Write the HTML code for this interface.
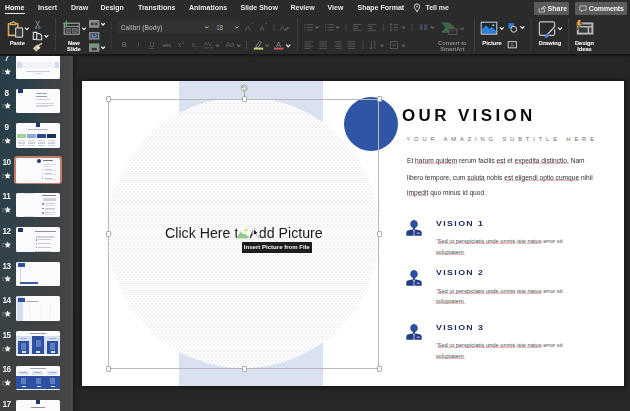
<!DOCTYPE html>
<html><head><meta charset="utf-8">
<style>
*{margin:0;padding:0;box-sizing:border-box}
html,body{width:630px;height:411px;overflow:hidden;background:#262626;font-family:"Liberation Sans",sans-serif;}
.abs{position:absolute}
#tabs{position:absolute;left:0;top:0;width:630px;height:17px;background:#2b2b2b}
#tabs span{position:absolute;top:2.8px;font-size:7px;font-weight:bold;color:#e6e6e6;white-space:nowrap;line-height:9px;filter:blur(.25px)}
#ribbon{position:absolute;left:0;top:17px;width:630px;height:37px;background:#2b2b2b}
#rline{position:absolute;left:0;top:53.8px;width:630px;height:5px;background:linear-gradient(180deg,#171717 0,#191919 1.4px,#212121 2.4px,#262626 5px)}
.lbl{position:absolute;font-size:5.7px;font-weight:bold;color:#f4f4f4;-webkit-text-stroke:.1px #f4f4f4;white-space:nowrap;line-height:6.4px;text-align:center;filter:blur(.25px)}
.sep{position:absolute;width:1px;background:#3e3e3e}
#panel{position:absolute;left:0;top:55.5px;width:69.5px;height:356px;background:linear-gradient(180deg,rgba(78,72,62,0) 60%,rgba(78,72,62,.25) 100%),linear-gradient(90deg,rgba(70,70,70,0) 50%,rgba(70,70,70,.5) 86%,rgba(70,70,70,.85) 100%),radial-gradient(ellipse 64px 300px at 0 30px,#283d46 0%,#2c4049 35%,#354349 65%,#3c4042 100%);overflow:hidden}
#scroll{position:absolute;left:69.5px;top:55.5px;width:3.2px;height:356px;background:linear-gradient(180deg,#484848 0,#494949 60%,#4c4a46 100%)}
#pshadow{position:absolute;left:72.7px;top:55.5px;width:7px;height:356px;background:linear-gradient(90deg,#1a1a1a 0,#222 40%,#262626 100%)}
#bstrip{position:absolute;left:72.7px;top:399.5px;width:558px;height:12px;background:#292929}
.th{position:absolute;left:16px;width:44px;height:24.5px;background:#fbfbfd;border-radius:1.5px;overflow:hidden}
.th i{position:absolute;display:block;filter:blur(.35px)}
.num{position:absolute;left:0;width:13px;text-align:center;font-size:8.2px;font-weight:bold;color:#f0f0f0;line-height:8px;letter-spacing:-.45px;filter:blur(.3px)}
.star{position:absolute;left:1.9px;width:9.4px;height:7.5px;filter:blur(.25px)}
#slide{position:absolute;left:82px;top:81px;width:542px;height:305px;background:#fff;box-shadow:0 0 3px 2px #191919;overflow:hidden}

.pl{position:absolute;font-size:7px;color:#2e2e2e;line-height:13px;white-space:nowrap;transform-origin:0 0;transform:scaleX(.943);filter:blur(.2px)}
.pl u{text-decoration:underline solid rgba(214,100,100,.45);text-decoration-thickness:.7px;text-underline-offset:.4px;text-decoration-skip-ink:none}
.vt{position:absolute;font-size:8px;font-weight:bold;letter-spacing:1.25px;color:#1c2b60;line-height:10px;white-space:nowrap;transform-origin:0 0;transform:scaleX(1.1);filter:blur(.2px)}
.vl{position:absolute;font-size:5.72px;color:#4a4a4a;line-height:8px;white-space:nowrap;transform-origin:0 0}
.vl u{text-decoration:underline solid rgba(214,100,100,.45);text-decoration-thickness:.5px;text-underline-offset:.3px;text-decoration-skip-ink:none}
.hd{position:absolute;width:5.2px;height:5.2px;background:#fff;border:.8px solid #a6a6a6;border-radius:1.2px;filter:blur(.2px)}
</style></head><body>
<div id="tabs">
<span style="left:5px;color:#fff">Home</span><i style="position:absolute;left:5px;top:13px;width:20px;height:1.2px;background:#f0f0f0"></i>
<span style="left:38px">Insert</span>
<span style="left:71px">Draw</span>
<span style="left:100.5px">Design</span>
<span style="left:138px">Transitions</span>
<span style="left:189px">Animations</span>
<span style="left:240.5px">Slide Show</span>
<span style="left:290.5px">Review</span>
<span style="left:327.5px">View</span>
<span style="left:357.5px">Shape Format</span>
<svg style="position:absolute;left:413.300px;top:3px;filter:blur(.2px)" width="8" height="10" viewBox="0 0 8 10"><path d="M4 .9a2.700 2.700 0 0 0-2.700 2.700c0 1.300.9 2.100 1.500 3.200L4 8.900l1.200-2.100c.6-1.100 1.500-1.900 1.500-3.200A2.700 2.700 0 0 0 4 .9z" fill="none" stroke="#e0e0e0" stroke-width=".95"/><circle cx="4" cy="3.600" r=".8" fill="#e0e0e0"/></svg>
<span style="left:425.400px">Tell me</span>
<div style="position:absolute;left:533.5px;top:2px;width:35.5px;height:12.7px;background:#5b5b5b;border-radius:1.5px"></div>
<svg style="position:absolute;left:537.5px;top:5.2px" width="8" height="8" viewBox="0 0 8 8"><path d="M1 3.5v3.5h5.5V5M3 4.6c.4-1.6 1.6-2.4 3-2.4V1l1.6 1.8L6 4.6V3.4c-1.2 0-2.2.3-3 1.2z" fill="none" stroke="#e2e2e2" stroke-width=".7"/></svg>
<span style="left:547.6px;top:4.2px;color:#f2f2f2">Share</span>
<div style="position:absolute;left:574.8px;top:2px;width:52px;height:12.7px;background:#5b5b5b;border-radius:1.5px"></div>
<svg style="position:absolute;left:579px;top:5.4px" width="8" height="8" viewBox="0 0 8 8"><path d="M.8 1h6.4v4.2H4L2.4 6.8V5.2H.8z" fill="none" stroke="#e2e2e2" stroke-width=".7"/></svg>
<span style="left:588.8px;top:4.2px;color:#f2f2f2;letter-spacing:-.15px">Comments</span>
</div>
<div id="ribbon"></div>
<div id="rline"></div><!--RIB--><svg id="rsvg" style="position:absolute;left:0;top:0;filter:blur(.3px)" width="630" height="56" viewBox="0 0 630 56"><path d="M11 23.800H8.500V35.400H15M16.200 23.800H17.800V27" fill="none" stroke="#dba866" stroke-width="1.600" stroke-linejoin="round"/><path d="M10.600 24.600V22.800H12L13.200 21.400L14.400 22.800H15.800V24.600z" fill="#2b2b2b" stroke="#dba866" stroke-width="1.200"/><rect x="15.600" y="27.800" width="7" height="9.400" rx=".8" fill="#3a3a3a" stroke="#c6c6c6" stroke-width="1.200"/><path d="M25.35 28.075L26.8 29.67L28.25 28.075" fill="none" stroke="#f0f0f0" stroke-width="1.25" stroke-linecap="round" stroke-linejoin="round"/><path d="M35.800 20.800L39.200 26.800M39.600 20.800L36.200 26.800" stroke="#8596b4" stroke-width=".9" fill="none"/><circle cx="36" cy="27.700" r=".9" fill="none" stroke="#8596b4" stroke-width=".8"/><circle cx="39.400" cy="27.700" r=".9" fill="none" stroke="#8596b4" stroke-width=".8"/><path d="M33.300 32.300h3.700v7h-3.700z" fill="none" stroke="#d6d6d6" stroke-width="1.150"/><path d="M36.700 33.600h3l1.900 1.900v4.200h-4.900z" fill="#2b2b2b" stroke="#d6d6d6" stroke-width="1.150" stroke-linejoin="round"/><path d="M44.949999999999996 35.574999999999996L46.4 37.169999999999995L47.85 35.574999999999996" fill="none" stroke="#f0f0f0" stroke-width="1.25" stroke-linecap="round" stroke-linejoin="round"/><path d="M33 48.200L37.400 44.600L40.600 47.800L36.200 51.600z" fill="#ead8bb"/><path d="M35.200 47.800L38 50.400" stroke="#5a4a38" stroke-width=".7"/><path d="M38.600 45.400L41.400 43.600" stroke="#c9c0b2" stroke-width="1.700" stroke-linecap="round"/><path d="M55.5 18V50" stroke="#3d3d3d" stroke-width="1"/><rect x="64.2" y="23.2" width="15" height="11" fill="none" stroke="#a8a8a8" stroke-width="1.1"/><path d="M64.2 26.4h15" stroke="#a8a8a8" stroke-width=".9"/><rect x="66.2" y="28.6" width="4.6" height="3.8" fill="#555" stroke="#8a8a8a" stroke-width=".6"/><rect x="72.6" y="28.6" width="4.6" height="3.8" fill="#555" stroke="#8a8a8a" stroke-width=".6"/><path d="M66.4 20.6v6M63.4 23.6h6" stroke="#5fae6e" stroke-width="1.1"/><path d="M82.55 28.075L84 29.67L85.45 28.075" fill="none" stroke="#f0f0f0" stroke-width="1.25" stroke-linecap="round" stroke-linejoin="round"/><rect x="89" y="20" width="10.4" height="7.8" fill="#8c8c8c"/><rect x="91" y="22.6" width="2.6" height="2.6" fill="#3a3a3a"/><rect x="94.8" y="22.6" width="2.6" height="2.6" fill="#3a3a3a"/><path d="M101.55 23.474999999999998L103 25.07L104.45 23.474999999999998" fill="none" stroke="#f0f0f0" stroke-width="1.25" stroke-linecap="round" stroke-linejoin="round"/><rect x="89" y="32" width="10.4" height="7.6" fill="#8c8c8c"/><rect x="90.4" y="33.2" width="7.6" height="5" fill="#3a4f78"/><path d="M92.4 34.4v2.6h2.2M95.2 34.2a1.6 1.6 0 0 1 0 3" fill="none" stroke="#9fb4dd" stroke-width=".8"/><rect x="89" y="43.4" width="10.4" height="8.4" fill="#8c8c8c"/><rect x="89.6" y="44" width="9.2" height="2.4" fill="#6f9b76"/><rect x="91.6" y="47.8" width="5.2" height="2.6" fill="#3a3a3a"/><path d="M101.55 46.975L103 48.57L104.45 46.975" fill="none" stroke="#f0f0f0" stroke-width="1.25" stroke-linecap="round" stroke-linejoin="round"/><path d="M111.5 18V50" stroke="#343434" stroke-width="1"/><rect x="117.5" y="21" width="123" height="12.8" rx="1.5" fill="#323232"/><path d="M205.39999999999998 26.75L206.7 28.18L208.0 26.75" fill="none" stroke="#c0c0c0" stroke-width="1" stroke-linecap="round" stroke-linejoin="round"/><path d="M235.5 26.75L236.8 28.18L238.10000000000002 26.75" fill="none" stroke="#c0c0c0" stroke-width="1" stroke-linecap="round" stroke-linejoin="round"/><text x="245" y="30.6" font-size="8.5" fill="#5e5e5e" font-family="Liberation Sans">A</text><path d="M251.4 24l1 -1.2l1 1.2" stroke="#5e5e5e" stroke-width=".7" fill="none"/><text x="259.4" y="30.6" font-size="7.4" fill="#5e5e5e" font-family="Liberation Sans">A</text><path d="M264.8 23l1 1.2l1 -1.2" stroke="#5e5e5e" stroke-width=".7" fill="none"/><path d="M274 23.5V31" stroke="#444" stroke-width="1"/><text x="279.6" y="30.8" font-size="8.5" fill="#5e5e5e" font-family="Liberation Sans">A</text><path d="M285 30.4l3.4 -3.4" stroke="#6b5560" stroke-width="1.6"/><text x="121.8" y="47" font-size="7" fill="#5e5e5e" font-family="Liberation Sans" font-weight="bold">B</text><text x="137.2" y="47" font-size="7" fill="#5e5e5e" font-family="Liberation Sans" font-style="italic">I</text><text x="149.4" y="46.6" font-size="7" fill="#5e5e5e" font-family="Liberation Sans" >U</text><path d="M149 48.4h5.6" stroke="#5e5e5e" stroke-width=".7"/><text x="162.4" y="47" font-size="5.4" fill="#5e5e5e" font-family="Liberation Sans" >abc</text><path d="M162 45.4h8.8" stroke="#5e5e5e" stroke-width=".6"/><text x="178" y="47.4" font-size="6.6" fill="#5e5e5e" font-family="Liberation Sans" >x</text><text x="181.8" y="44.4" font-size="3.6" fill="#5e5e5e" font-family="Liberation Sans" >2</text><text x="191.8" y="46.6" font-size="6.6" fill="#5e5e5e" font-family="Liberation Sans" >x</text><text x="195.6" y="48.6" font-size="3.6" fill="#5e5e5e" font-family="Liberation Sans" >2</text><text x="204" y="46" font-size="6.2" fill="#5e5e5e" font-family="Liberation Sans" >AV</text><path d="M204.4 47.8h8M204.4 47.8l1 -.8M204.4 47.8l1 .8M212.4 47.8l-1 -.8M212.4 47.8l-1 .8" stroke="#5e5e5e" stroke-width=".5" fill="none"/><path d="M216.25 44.875L217.7 46.47L219.14999999999998 44.875" fill="none" stroke="#5e5e5e" stroke-width="1.25" stroke-linecap="round" stroke-linejoin="round"/><text x="225.4" y="47.4" font-size="7.4" fill="#5e5e5e" font-family="Liberation Sans" >Aa</text><path d="M237.25 44.875L238.7 46.47L240.14999999999998 44.875" fill="none" stroke="#5e5e5e" stroke-width="1.25" stroke-linecap="round" stroke-linejoin="round"/><path d="M246.6 41V49.5" stroke="#444" stroke-width="1"/><path d="M256 46l3.6-4.8 2 1.4-3.6 4.6-2 .4z" fill="none" stroke="#9a9a9a" stroke-width=".8"/><rect x="253.8" y="47.6" width="9.4" height="2" fill="#c3cd78"/><path d="M265.75 44.875L267.2 46.47L268.65 44.875" fill="none" stroke="#5e5e5e" stroke-width="1.25" stroke-linecap="round" stroke-linejoin="round"/><text x="276" y="46.6" font-size="7.6" fill="#8a8a8a" font-family="Liberation Sans" >A</text><rect x="274" y="47.6" width="9.4" height="2" fill="#d4555a"/><path d="M286.5 44.949999999999996L288.2 46.82L289.9 44.949999999999996" fill="none" stroke="#f2f2f2" stroke-width="1.2" stroke-linecap="round" stroke-linejoin="round"/><path d="M297.5 18V51" stroke="#3d3d3d" stroke-width="1"/><rect x="304.4" y="24.1" width="1" height="1" fill="#5e5e5e"/><path d="M306.79999999999995 24.6h6.4" stroke="#5e5e5e" stroke-width=".8"/><rect x="304.4" y="26.8" width="1" height="1" fill="#5e5e5e"/><path d="M306.79999999999995 27.3h6.4" stroke="#5e5e5e" stroke-width=".8"/><rect x="304.4" y="29.5" width="1" height="1" fill="#5e5e5e"/><path d="M306.79999999999995 30.0h6.4" stroke="#5e5e5e" stroke-width=".8"/><path d="M315.75 26.674999999999997L317.2 28.27L318.65 26.674999999999997" fill="none" stroke="#5e5e5e" stroke-width="1.25" stroke-linecap="round" stroke-linejoin="round"/><rect x="325" y="24.1" width="1" height="1" fill="#5e5e5e"/><path d="M327.4 24.6h6.4" stroke="#5e5e5e" stroke-width=".8"/><rect x="325" y="26.8" width="1" height="1" fill="#5e5e5e"/><path d="M327.4 27.3h6.4" stroke="#5e5e5e" stroke-width=".8"/><rect x="325" y="29.5" width="1" height="1" fill="#5e5e5e"/><path d="M327.4 30.0h6.4" stroke="#5e5e5e" stroke-width=".8"/><path d="M336.15000000000003 26.674999999999997L337.6 28.27L339.05 26.674999999999997" fill="none" stroke="#5e5e5e" stroke-width="1.25" stroke-linecap="round" stroke-linejoin="round"/><path d="M346 23.5V31" stroke="#444" stroke-width="1"/><path d="M353 24.4h8.4" stroke="#5e5e5e" stroke-width="0.8"/><path d="M353 26.4h5.04" stroke="#5e5e5e" stroke-width="0.8"/><path d="M353 28.4h5.04" stroke="#5e5e5e" stroke-width="0.8"/><path d="M353 30.4h8.4" stroke="#5e5e5e" stroke-width="0.8"/><path d="M367.6 24.4h8.4" stroke="#5e5e5e" stroke-width="0.8"/><path d="M367.6 26.4h5.04" stroke="#5e5e5e" stroke-width="0.8"/><path d="M367.6 28.4h5.04" stroke="#5e5e5e" stroke-width="0.8"/><path d="M367.6 30.4h8.4" stroke="#5e5e5e" stroke-width="0.8"/><path d="M383.4 23.5V31" stroke="#444" stroke-width="1"/><path d="M391 23.6v7.6M389.8 25l1.2-1.4 1.2 1.4M389.8 29.8l1.2 1.4 1.2-1.4" stroke="#5e5e5e" stroke-width=".7" fill="none"/><path d="M393.6 24.6h4.6" stroke="#5e5e5e" stroke-width="0.8"/><path d="M393.6 27.3h4.6" stroke="#5e5e5e" stroke-width="0.8"/><path d="M393.6 30.0h4.6" stroke="#5e5e5e" stroke-width="0.8"/><path d="M402.15000000000003 26.674999999999997L403.6 28.27L405.05 26.674999999999997" fill="none" stroke="#5e5e5e" stroke-width="1.25" stroke-linecap="round" stroke-linejoin="round"/><path d="M412 23.5V31" stroke="#444" stroke-width="1"/><rect x="419.6" y="24.4" width="3.2" height="5.6" fill="#414858"/><rect x="424" y="24.4" width="3.2" height="5.6" fill="#414858"/><path d="M430.95 26.674999999999997L432.4 28.27L433.84999999999997 26.674999999999997" fill="none" stroke="#5e5e5e" stroke-width="1.25" stroke-linecap="round" stroke-linejoin="round"/><path d="M304.6 41.8h8.4" stroke="#5e5e5e" stroke-width="0.8"/><path d="M304.6 44.0h5.88" stroke="#5e5e5e" stroke-width="0.8"/><path d="M304.6 46.199999999999996h8.4" stroke="#5e5e5e" stroke-width="0.8"/><path d="M304.6 48.4h5.88" stroke="#5e5e5e" stroke-width="0.8"/><path d="M319.4 41.8h7.6" stroke="#5e5e5e" stroke-width="0.8"/><path d="M319.4 44.0h7.6" stroke="#5e5e5e" stroke-width="0.8"/><path d="M319.4 46.199999999999996h7.6" stroke="#5e5e5e" stroke-width="0.8"/><path d="M319.4 48.4h7.6" stroke="#5e5e5e" stroke-width="0.8"/><path d="M334.2 41.8h7.6M335.6 44h6.2M334.2 46.2h7.6M335.6 48.4h6.2" stroke="#5e5e5e" stroke-width=".8"/><path d="M347.6 41.8h7.6" stroke="#5e5e5e" stroke-width="0.8"/><path d="M347.6 44.0h7.6" stroke="#5e5e5e" stroke-width="0.8"/><path d="M347.6 46.199999999999996h7.6" stroke="#5e5e5e" stroke-width="0.8"/><path d="M347.6 48.4h7.6" stroke="#5e5e5e" stroke-width="0.8"/><path d="M363 41V49.5" stroke="#444" stroke-width="1"/><path d="M371.4 41v8M370 47.6l1.4 1.6 1.4-1.6" stroke="#5e5e5e" stroke-width=".7" fill="none"/><path d="M374.8 41v8" stroke="#5e5e5e" stroke-width=".7"/><path d="M380.55 44.875L382 46.47L383.45 44.875" fill="none" stroke="#5e5e5e" stroke-width="1.25" stroke-linecap="round" stroke-linejoin="round"/><rect x="390.4" y="41.6" width="7" height="7" fill="none" stroke="#5e5e5e" stroke-width=".8"/><path d="M391.8 45.1h4.2" stroke="#5e5e5e" stroke-width=".8"/><path d="M402.15000000000003 44.875L403.6 46.47L405.05 44.875" fill="none" stroke="#5e5e5e" stroke-width="1.25" stroke-linecap="round" stroke-linejoin="round"/><path d="M440.800 22.400h8.800l5.200 5.200-5.200 5.200h-8.800l4.800-5.200z" fill="#3d6549"/><rect x="448.600" y="28.600" width="8.400" height="5.800" fill="#2c2c2c" stroke="#5c5c5c" stroke-width=".9"/><path d="M448.600 30.400h8.400" stroke="#5c5c5c" stroke-width=".7"/><path d="M460.75 28.075L462.2 29.67L463.65 28.075" fill="none" stroke="#5e5e5e" stroke-width="1.25" stroke-linecap="round" stroke-linejoin="round"/><path d="M474.5 18V51" stroke="#3d3d3d" stroke-width="1"/><rect x="481.2" y="22.2" width="15.6" height="12" fill="#1d2838"/><path d="M481.6 33.8v-4l4.4-4.600 3.400 3.600 2.200-2 4.800 4.400v2.600z" fill="#2f80d6"/><circle cx="493.4" cy="25.200" r="1" fill="#d9c9a0"/><rect x="481.2" y="22.2" width="15.6" height="12" fill="none" stroke="#ccd3dc" stroke-width="1"/><path d="M500.2 27.599999999999998L501.8 29.36L503.40000000000003 27.599999999999998" fill="none" stroke="#f0f0f0" stroke-width="1.2" stroke-linecap="round" stroke-linejoin="round"/><rect x="508.4" y="23.200" width="5.600" height="5.200" fill="#2f7dd1"/><circle cx="513.8" cy="29.300" r="2.900" fill="#2b2b2b" stroke="#d2d2d2" stroke-width="1"/><path d="M520.6999999999999 26.599999999999998L522.3 28.36L523.9 26.599999999999998" fill="none" stroke="#f0f0f0" stroke-width="1.2" stroke-linecap="round" stroke-linejoin="round"/><rect x="508.2" y="41.6" width="8.200" height="6.200" fill="none" stroke="#c8c8c8" stroke-width="1"/><text x="510.6" y="46.8" font-size="4.8" fill="#6fa0dc" font-family="Liberation Sans" >A</text><path d="M531 18V51" stroke="#3d3d3d" stroke-width="1"/><rect x="539.4" y="21.800" width="15.200" height="13.600" rx="1.2" fill="none" stroke="#c4c4c4" stroke-width="1.2"/><path d="M546.600 35.600l8.200-9.200" stroke="#2b2b2b" stroke-width="3.400"/><path d="M548 34l6.800-7.600" stroke="#dadada" stroke-width="1.200"/><path d="M544.200 37.800c2.600.6 5-.8 5.400-3.600l-2.600-1.400c-1 1.800-.8 3.600-2.800 5z" fill="#3f8de0"/><path d="M558.4 27.8L560 29.560000000000002L561.6 27.8" fill="none" stroke="#f0f0f0" stroke-width="1.2" stroke-linecap="round" stroke-linejoin="round"/><path d="M568.7 18V51" stroke="#3d3d3d" stroke-width="1"/><rect x="577.800" y="23.400" width="14.600" height="10.200" fill="#3a3a3a" stroke="#b4b4b4" stroke-width="2"/><path d="M577.800 26.800h14.600M588.400 26.800v7" stroke="#b4b4b4" stroke-width="1.500"/><path d="M577.800 19.800h3.600l-1.400 3.600h2.200l-5 6.600 1.400-4.600h-2.400z" fill="#f3a73a" stroke="#2b2b2b" stroke-width=".6"/></svg>
<div class="lbl" style="left:2.300px;width:30px;top:40px">Paste</div>
<div class="lbl" style="left:58.900px;width:30px;top:40px">New<br>Slide</div>
<div class="lbl" style="left:432.300px;width:40px;top:40px;color:#8a8a8a;-webkit-text-stroke:0">Convert to<br>SmartArt</div>
<div class="lbl" style="left:477px;width:30px;top:40px">Picture</div>
<div class="lbl" style="left:535px;width:30px;top:40px">Drawing</div>
<div class="lbl" style="left:569.500px;width:30px;top:40px">Design<br>Ideas</div>
<div class="lbl" style="left:120.800px;top:24.200px;font-size:6.350px;color:#9c9c9c;-webkit-text-stroke:0;line-height:7px">Calibri (Body)</div>
<div class="lbl" style="left:216.200px;top:24.200px;font-size:6.300px;font-weight:normal;color:#a4a4a4;-webkit-text-stroke:0;line-height:7px;letter-spacing:-.2px;filter:none">18</div>
<!--/RIB-->
<!--PANEL--><div id="panel"><div class="th" style="top:-1.3px"><i style="left:1.2px;top:7.5px;width:4.6px;height:6px;background:#d3dcf0"></i><i style="left:38.6px;top:7.5px;width:4.6px;height:6px;background:#d3dcf0"></i><i style="left:5.8px;top:7.5px;width:32.8px;height:6px;background:#f0f2f7"></i><i style="left:10px;top:17.2px;width:24px;height:0.7px;background:#c9ccd6"></i><i style="left:18px;top:19.2px;width:8px;height:0.6px;background:#d9dbe3"></i></div><div class="num" style="top:-0.5px">7</div><svg class="star" style="top:12.3px" viewBox="0 0 10 8"><path d="M.6 2.600h1.200M.4 4.200h1M.6 5.800h1.200" stroke="#d8d8d8" stroke-width=".6"/><path d="M6 .5l1.060 2.250 2.440.3-1.800 1.700.46 2.450L6 6l-2.160 1.200.46-2.450-1.800-1.700 2.440-.3z" fill="#f4f4f4"/></svg><div class="th" style="top:33.3px"><i style="left:2.4px;top:0.6px;width:4.2px;height:3.8px;background:#22366f"></i><i style="left:19.8px;top:4px;width:11px;height:0.9px;background:#9a9eaa"></i><i style="left:19.8px;top:7px;width:11px;height:0.9px;background:#9a9eaa"></i><i style="left:19.8px;top:10.6px;width:14px;height:0.5px;background:#d2d4dc"></i><i style="left:19.8px;top:14.6px;width:18px;height:0.5px;background:#cfd2da"></i><i style="left:19.8px;top:16px;width:18px;height:0.5px;background:#cfd2da"></i><i style="left:19.8px;top:17.4px;width:12px;height:0.5px;background:#d6d8e0"></i></div><div class="num" style="top:34.1px">8</div><svg class="star" style="top:46.9px" viewBox="0 0 10 8"><path d="M.6 2.600h1.200M.4 4.200h1M.6 5.800h1.200" stroke="#d8d8d8" stroke-width=".6"/><path d="M6 .5l1.060 2.250 2.440.3-1.800 1.700.46 2.450L6 6l-2.160 1.200.46-2.450-1.800-1.700 2.440-.3z" fill="#f4f4f4"/></svg><div class="th" style="top:67.9px"><i style="left:20px;top:0px;width:3.5px;height:3.2px;background:#22366f"></i><i style="left:12px;top:5.8px;width:20px;height:0.7px;background:#b5b8c4"></i><i style="left:1px;top:10.6px;width:8.5px;height:4.2px;background:#a7cc8d"></i><i style="left:11px;top:10.6px;width:8.5px;height:4.2px;background:#8da9db"></i><i style="left:21px;top:10.6px;width:8.5px;height:4.2px;background:#2a4b8f"></i><i style="left:31px;top:10.6px;width:8.9px;height:4.2px;background:#1b2f5f"></i><i style="left:1.5px;top:17.0px;width:7.5px;height:0.5px;background:#d0d3dc"></i><i style="left:1.5px;top:18.4px;width:7.5px;height:0.5px;background:#d0d3dc"></i><i style="left:1.5px;top:19.8px;width:7.5px;height:0.5px;background:#d0d3dc"></i><i style="left:1.5px;top:21.2px;width:7.5px;height:0.5px;background:#d0d3dc"></i><i style="left:11.5px;top:17.0px;width:7.5px;height:0.5px;background:#d0d3dc"></i><i style="left:11.5px;top:18.4px;width:7.5px;height:0.5px;background:#d0d3dc"></i><i style="left:11.5px;top:19.8px;width:7.5px;height:0.5px;background:#d0d3dc"></i><i style="left:11.5px;top:21.2px;width:7.5px;height:0.5px;background:#d0d3dc"></i><i style="left:21.5px;top:17.0px;width:7.5px;height:0.5px;background:#d0d3dc"></i><i style="left:21.5px;top:18.4px;width:7.5px;height:0.5px;background:#d0d3dc"></i><i style="left:21.5px;top:19.8px;width:7.5px;height:0.5px;background:#d0d3dc"></i><i style="left:21.5px;top:21.2px;width:7.5px;height:0.5px;background:#d0d3dc"></i><i style="left:31.5px;top:17.0px;width:7.5px;height:0.5px;background:#d0d3dc"></i><i style="left:31.5px;top:18.4px;width:7.5px;height:0.5px;background:#d0d3dc"></i><i style="left:31.5px;top:19.8px;width:7.5px;height:0.5px;background:#d0d3dc"></i><i style="left:31.5px;top:21.2px;width:7.5px;height:0.5px;background:#d0d3dc"></i></div><div class="num" style="top:68.7px">9</div><svg class="star" style="top:81.5px" viewBox="0 0 10 8"><path d="M.6 2.600h1.200M.4 4.200h1M.6 5.800h1.200" stroke="#d8d8d8" stroke-width=".6"/><path d="M6 .5l1.060 2.250 2.440.3-1.800 1.700.46 2.450L6 6l-2.160 1.200.46-2.450-1.800-1.700 2.440-.3z" fill="#f4f4f4"/></svg><div style="position:absolute;left:14.300px;top:100.8px;width:47.400px;height:27.900px;border-radius:3.2px;background:#c67a6b;filter:blur(.45px)"></div><div class="th" style="top:102.5px"><i style="left:21.300px;top:.900px;width:4px;height:4px;border-radius:50%;background:#22366f"></i><i style="left:26.6px;top:2.4px;width:10.4px;height:0.9px;background:#6f7380"></i><i style="left:27px;top:6px;width:13px;height:0.6px;background:#d9dbe2"></i><i style="left:27px;top:7.6px;width:9px;height:0.6px;background:#e0e2e8"></i><i style="left:25.8px;top:10.8px;width:1.7px;height:1.7px;background:#b4bbd2"></i><i style="left:28.6px;top:11.0px;width:7px;height:0.6px;background:#c4c7d1"></i><i style="left:28.6px;top:12.4px;width:11px;height:0.5px;background:#e0e2e8"></i><i style="left:25.8px;top:14.8px;width:1.7px;height:1.7px;background:#b4bbd2"></i><i style="left:28.6px;top:15.0px;width:7px;height:0.6px;background:#c4c7d1"></i><i style="left:28.6px;top:16.400000000000002px;width:11px;height:0.5px;background:#e0e2e8"></i><i style="left:25.8px;top:19.4px;width:1.7px;height:1.7px;background:#b4bbd2"></i><i style="left:28.6px;top:19.599999999999998px;width:7px;height:0.6px;background:#c4c7d1"></i><i style="left:28.6px;top:21.0px;width:11px;height:0.5px;background:#e0e2e8"></i><i style="left:8px;top:0px;width:11.6px;height:0.8px;background:#eef1f8"></i><i style="left:8px;top:23.4px;width:11.6px;height:0.8px;background:#eef1f8"></i></div><div class="num" style="top:103.3px">10</div><svg class="star" style="top:116.1px" viewBox="0 0 10 8"><path d="M.6 2.600h1.200M.4 4.200h1M.6 5.800h1.200" stroke="#d8d8d8" stroke-width=".6"/><path d="M6 .5l1.060 2.250 2.440.3-1.800 1.700.46 2.450L6 6l-2.160 1.200.46-2.450-1.800-1.700 2.440-.3z" fill="#f4f4f4"/></svg><div class="th" style="top:137.1px"><i style="left:8px;top:0.4px;width:9.5px;height:0.9px;background:#d5dcee"></i><i style="left:8px;top:23.2px;width:9.5px;height:0.9px;background:#d5dcee"></i><i style="left:26px;top:2.2px;width:14px;height:0.9px;background:#7d818d"></i><i style="left:26.5px;top:5px;width:13px;height:0.5px;background:#d0d2da"></i><i style="left:26.5px;top:6.4px;width:13px;height:0.5px;background:#d0d2da"></i><i style="left:26.5px;top:7.8px;width:13px;height:0.5px;background:#d0d2da"></i><i style="left:26.4px;top:10.7px;width:1.6px;height:1.6px;background:#8c8fa6"></i><i style="left:28.8px;top:10.9px;width:10px;height:0.5px;background:#c9ccd5"></i><i style="left:28.8px;top:12.2px;width:10px;height:0.5px;background:#d9dbe2"></i><i style="left:26.4px;top:15.2px;width:1.6px;height:1.6px;background:#8c8fa6"></i><i style="left:28.8px;top:15.4px;width:10px;height:0.5px;background:#c9ccd5"></i><i style="left:28.8px;top:16.7px;width:10px;height:0.5px;background:#d9dbe2"></i><i style="left:26.4px;top:19.7px;width:1.6px;height:1.6px;background:#8c8fa6"></i><i style="left:28.8px;top:19.9px;width:10px;height:0.5px;background:#c9ccd5"></i><i style="left:28.8px;top:21.2px;width:10px;height:0.5px;background:#d9dbe2"></i></div><div class="num" style="top:137.9px">11</div><svg class="star" style="top:150.7px" viewBox="0 0 10 8"><path d="M.6 2.600h1.200M.4 4.200h1M.6 5.800h1.200" stroke="#d8d8d8" stroke-width=".6"/><path d="M6 .5l1.060 2.250 2.440.3-1.800 1.700.46 2.450L6 6l-2.160 1.200.46-2.450-1.800-1.700 2.440-.3z" fill="#f4f4f4"/></svg><div class="th" style="top:171.7px"><i style="left:2.4px;top:0.8px;width:4.6px;height:4.4px;background:#22366f"></i><i style="left:19px;top:3.8px;width:20.5px;height:0.8px;background:#8e929e"></i><i style="left:19.5px;top:8.4px;width:18px;height:0.5px;background:#d0d2da"></i><i style="left:19.5px;top:9.8px;width:18px;height:0.5px;background:#d0d2da"></i><i style="left:19.6px;top:12.0px;width:1.4px;height:1.4px;background:#7b80a0"></i><i style="left:21.8px;top:12.2px;width:13px;height:0.6px;background:#c5c8d2"></i><i style="left:19.6px;top:15.9px;width:1.4px;height:1.4px;background:#7b80a0"></i><i style="left:21.8px;top:16.099999999999998px;width:13px;height:0.6px;background:#c5c8d2"></i><i style="left:19.6px;top:19.8px;width:1.4px;height:1.4px;background:#7b80a0"></i><i style="left:21.8px;top:20.0px;width:13px;height:0.6px;background:#c5c8d2"></i><i style="left:19.6px;top:23.7px;width:1.4px;height:1.4px;background:#7b80a0"></i><i style="left:21.8px;top:23.9px;width:13px;height:0.6px;background:#c5c8d2"></i></div><div class="num" style="top:172.5px">12</div><svg class="star" style="top:185.3px" viewBox="0 0 10 8"><path d="M.6 2.600h1.200M.4 4.200h1M.6 5.800h1.200" stroke="#d8d8d8" stroke-width=".6"/><path d="M6 .5l1.060 2.250 2.440.3-1.800 1.700.46 2.450L6 6l-2.160 1.200.46-2.450-1.800-1.700 2.440-.3z" fill="#f4f4f4"/></svg><div class="th" style="top:206.3px"><i style="left:2px;top:1px;width:6.6px;height:4px;background:#2d50a0"></i><i style="left:3.8px;top:6px;width:0.5px;height:15px;background:#cfd4e2"></i><i style="left:4px;top:19.8px;width:17.8px;height:2.6px;background:#3b5aa6"></i></div><div class="num" style="top:207.1px">13</div><svg class="star" style="top:219.9px" viewBox="0 0 10 8"><path d="M.6 2.600h1.200M.4 4.200h1M.6 5.800h1.200" stroke="#d8d8d8" stroke-width=".6"/><path d="M6 .5l1.060 2.250 2.440.3-1.800 1.700.46 2.450L6 6l-2.160 1.200.46-2.450-1.800-1.700 2.440-.3z" fill="#f4f4f4"/></svg><div class="th" style="top:240.9px"><i style="left:1px;top:0px;width:6px;height:24.5px;background:#d3dcf0"></i><i style="left:2px;top:1.2px;width:6.6px;height:4.2px;background:#2d50a0"></i><i style="left:10px;top:4.6px;width:12.4px;height:0.9px;background:#a8abb6"></i><i style="left:13px;top:7px;width:0.4px;height:16px;background:#f1f2f7"></i><i style="left:24px;top:7px;width:0.4px;height:16px;background:#f1f2f7"></i><i style="left:34px;top:7px;width:0.4px;height:16px;background:#f1f2f7"></i></div><div class="num" style="top:241.7px">14</div><svg class="star" style="top:254.5px" viewBox="0 0 10 8"><path d="M.6 2.600h1.200M.4 4.200h1M.6 5.800h1.200" stroke="#d8d8d8" stroke-width=".6"/><path d="M6 .5l1.060 2.250 2.440.3-1.800 1.700.46 2.450L6 6l-2.160 1.200.46-2.450-1.800-1.700 2.440-.3z" fill="#f4f4f4"/></svg><div class="th" style="top:275.5px"><i style="left:14px;top:2px;width:16px;height:0.7px;background:#9ca0ac"></i><i style="left:0px;top:5.4px;width:44px;height:17.6px;background:#d6def0"></i><i style="left:2.2px;top:10.2px;width:10.8px;height:12.6px;background:#2d50a0"></i><i style="left:16px;top:5.4px;width:12px;height:17.4px;background:#2d50a0"></i><i style="left:30.6px;top:10.2px;width:11.2px;height:12.6px;background:#2d50a0"></i><i style="left:4px;top:6.8px;width:7px;height:0.6px;background:#9fb0d6"></i><i style="left:32.5px;top:6.8px;width:7px;height:0.6px;background:#9fb0d6"></i><i style="left:5px;top:12px;width:5px;height:7px;background:#5f7cc0"></i><i style="left:19.5px;top:9px;width:5px;height:7px;background:#5f7cc0"></i><i style="left:33.6px;top:12px;width:5px;height:7px;background:#5f7cc0"></i><i style="left:6px;top:20.4px;width:4px;height:1.2px;background:#dfe6f6"></i><i style="left:20px;top:20.4px;width:4px;height:1.2px;background:#dfe6f6"></i><i style="left:34.5px;top:20.4px;width:4px;height:1.2px;background:#dfe6f6"></i></div><div class="num" style="top:276.3px">15</div><svg class="star" style="top:289.1px" viewBox="0 0 10 8"><path d="M.6 2.600h1.200M.4 4.200h1M.6 5.800h1.200" stroke="#d8d8d8" stroke-width=".6"/><path d="M6 .5l1.060 2.250 2.440.3-1.800 1.700.46 2.450L6 6l-2.160 1.200.46-2.450-1.800-1.700 2.440-.3z" fill="#f4f4f4"/></svg><div class="th" style="top:310.1px"><i style="left:14px;top:2px;width:16px;height:0.7px;background:#9ca0ac"></i><i style="left:1.6px;top:5px;width:11.4px;height:4.2px;background:#dde4f3"></i><i style="left:3.6px;top:6.8px;width:7px;height:0.6px;background:#a9b6d6"></i><i style="left:16px;top:5px;width:11.4px;height:4.2px;background:#dde4f3"></i><i style="left:18px;top:6.8px;width:7px;height:0.6px;background:#a9b6d6"></i><i style="left:30.6px;top:5px;width:11.4px;height:4.2px;background:#dde4f3"></i><i style="left:32.6px;top:6.8px;width:7px;height:0.6px;background:#a9b6d6"></i><i style="left:0px;top:10.4px;width:44px;height:12.6px;background:#2d50a0"></i><i style="left:5px;top:12px;width:5px;height:6.5px;background:#5f7cc0"></i><i style="left:6px;top:20px;width:4px;height:1.2px;background:#dfe6f6"></i><i style="left:19.5px;top:12px;width:5px;height:6.5px;background:#5f7cc0"></i><i style="left:20.5px;top:20px;width:4px;height:1.2px;background:#dfe6f6"></i><i style="left:33.6px;top:12px;width:5px;height:6.5px;background:#5f7cc0"></i><i style="left:34.6px;top:20px;width:4px;height:1.2px;background:#dfe6f6"></i></div><div class="num" style="top:310.9px">16</div><svg class="star" style="top:323.7px" viewBox="0 0 10 8"><path d="M.6 2.600h1.200M.4 4.200h1M.6 5.800h1.200" stroke="#d8d8d8" stroke-width=".6"/><path d="M6 .5l1.060 2.250 2.440.3-1.800 1.700.46 2.450L6 6l-2.160 1.200.46-2.450-1.800-1.700 2.440-.3z" fill="#f4f4f4"/></svg><div class="th" style="top:344.7px"><i style="left:20.2px;top:0px;width:3.8px;height:3.6px;background:#22366f"></i><i style="left:15px;top:6.6px;width:14px;height:0.8px;background:#8d919d"></i></div><div class="num" style="top:345.5px">17</div><svg class="star" style="top:358.3px" viewBox="0 0 10 8"><path d="M.6 2.600h1.200M.4 4.200h1M.6 5.800h1.200" stroke="#d8d8d8" stroke-width=".6"/><path d="M6 .5l1.060 2.250 2.440.3-1.800 1.700.46 2.450L6 6l-2.160 1.200.46-2.450-1.800-1.700 2.440-.3z" fill="#f4f4f4"/></svg></div><!--/PANEL-->
<div id="scroll"></div><div id="bstrip"></div><div id="pshadow"></div>
<!--SLIDE--><div id="slide"><div style="position:absolute;left:97px;top:0;width:144.2px;height:305px;background:#dae2f2"></div><div style="position:absolute;left:26.8px;top:18.0px;width:270.700px;height:270px;overflow:hidden"><div style="position:absolute;left:-0.60px;top:-1.80px;width:270.6px;height:270.6px;border-radius:50%;background-color:#fefefe;background-image:radial-gradient(circle,#dfe0e4 0.4px,rgba(255,255,255,0) 1px),radial-gradient(circle,#dfe0e4 0.4px,rgba(255,255,255,0) 1px);background-size:4px 4.400px;background-position:0 0,2px 2.200px"></div></div><div style="position:absolute;left:261.7px;top:16px;width:54px;height:54px;border-radius:50%;background:#2f55a5"></div><div id="title" style="position:absolute;left:319.8px;top:24.9px;font-size:16px;font-weight:bold;letter-spacing:3.200px;color:#0c0c0c;line-height:20px;white-space:nowrap;transform-origin:0 0;transform:scaleX(1.059);filter:blur(.2px)">OUR VISION</div><div id="sub" style="position:absolute;left:324.3px;top:53.5px;font-size:5.8px;letter-spacing:3.85px;color:#6c6c6c;line-height:8px;white-space:nowrap">YOUR AMAZING SUBTITLE HERE</div><div class="pl" style="top:73.4px;left:325px">Et <u>harum quidem</u> rerum facilis <u>est</u> et <u>expedita distinctio.</u> Nam</div><div class="pl" style="top:89.7px;left:325px">libero tempore, cum <u>soluta</u> nobis <u>est eligendi optio cumque</u> nihil</div><div class="pl" style="top:105.1px;left:325px"><u>impedit</u> quo minus id quod</div><svg style="position:absolute;left:324.3px;top:139.0px;filter:blur(.3px)" width="16" height="16" viewBox="0 0 16 16"><ellipse cx="8" cy="4.100" rx="3.300" ry="3.600" fill="#2b52a4" stroke="#1f3b86" stroke-width=".8"/><rect x="7" y="7.400" width="2" height="3" fill="#23408c"/><path d="M.3 15.800v-3c0-1.400 1-2.200 2.400-2.500l3.200-.7h4.200l3.200.7c1.400.3 2.400 1.100 2.400 2.500v3z" fill="#213d88"/><path d="M7.300 9.800h1.400l.4 5.600h-2.200z" fill="#fff" opacity=".8"/><path d="M7.600 11h.8l.3 4h-1.400z" fill="#23408c"/><path d="M10.800 13.200h3" stroke="#fff" stroke-width=".9" opacity=".85"/></svg><div class="vt" style="left:353.7px;top:137.5px">VISION 1</div><div class="vl" style="left:353.7px;top:156.0px">“<u>Sed ut perspiciatis unde omnis</u> <u>iste natus</u> error sit</div><div class="vl" style="left:353.7px;top:166.9px"><u>voluptatem&nbsp;</u></div><svg style="position:absolute;left:324.3px;top:188.5px;filter:blur(.3px)" width="16" height="16" viewBox="0 0 16 16"><ellipse cx="8" cy="4.100" rx="3.300" ry="3.600" fill="#2b52a4" stroke="#1f3b86" stroke-width=".8"/><rect x="7" y="7.400" width="2" height="3" fill="#23408c"/><path d="M.3 15.800v-3c0-1.400 1-2.200 2.400-2.500l3.200-.7h4.200l3.200.7c1.400.3 2.400 1.100 2.400 2.500v3z" fill="#213d88"/><path d="M7.300 9.800h1.400l.4 5.600h-2.200z" fill="#fff" opacity=".8"/><path d="M7.600 11h.8l.3 4h-1.400z" fill="#23408c"/><path d="M10.800 13.200h3" stroke="#fff" stroke-width=".9" opacity=".85"/></svg><div class="vt" style="left:353.7px;top:187px">VISION 2</div><div class="vl" style="left:353.7px;top:205.9px">“<u>Sed ut perspiciatis unde omnis</u> <u>iste natus</u> error sit</div><div class="vl" style="left:353.7px;top:216.4px"><u>voluptatem&nbsp;</u></div><svg style="position:absolute;left:324.3px;top:243.0px;filter:blur(.3px)" width="16" height="16" viewBox="0 0 16 16"><ellipse cx="8" cy="4.100" rx="3.300" ry="3.600" fill="#2b52a4" stroke="#1f3b86" stroke-width=".8"/><rect x="7" y="7.400" width="2" height="3" fill="#23408c"/><path d="M.3 15.800v-3c0-1.400 1-2.200 2.400-2.500l3.200-.7h4.200l3.200.7c1.400.3 2.400 1.100 2.400 2.500v3z" fill="#213d88"/><path d="M7.300 9.800h1.400l.4 5.600h-2.200z" fill="#fff" opacity=".8"/><path d="M7.600 11h.8l.3 4h-1.400z" fill="#23408c"/><path d="M10.800 13.200h3" stroke="#fff" stroke-width=".9" opacity=".85"/></svg><div class="vt" style="left:353.7px;top:241.5px">VISION 3</div><div class="vl" style="left:353.7px;top:260.4px">“<u>Sed ut perspiciatis unde omnis</u> <u>iste natus</u> error sit</div><div class="vl" style="left:353.7px;top:270.8px"><u>voluptatem&nbsp;</u></div><div id="click" style="position:absolute;left:82.7px;top:143.2px;font-size:14.900px;color:#1a1a1a;line-height:18px;white-space:nowrap;transform-origin:0 0;transform:scaleX(.953)">Click Here to Add Picture</div></div><div id="ov"><div style="position:absolute;left:108.8px;top:99.0px;width:270.7px;height:270.0px;border:1px solid #b8b8b8;box-sizing:border-box;margin:-.5px 0 0 -.5px"></div><div style="position:absolute;left:243.65px;top:90.500px;width:1px;height:8px;background:#a8a8a8"></div><div class="hd" style="left:106.2px;top:96.4px"></div><div class="hd" style="left:241.55px;top:96.4px"></div><div class="hd" style="left:376.9px;top:96.4px"></div><div class="hd" style="left:106.2px;top:231.4px"></div><div class="hd" style="left:376.9px;top:231.4px"></div><div class="hd" style="left:106.2px;top:366.4px"></div><div class="hd" style="left:241.55px;top:366.4px"></div><div class="hd" style="left:376.9px;top:366.4px"></div><svg style="position:absolute;left:240.15px;top:83.600px;filter:blur(.2px)" width="8" height="8" viewBox="0 0 8 8"><circle cx="4" cy="4" r="3.100" fill="#fff" stroke="#8f8f8f" stroke-width=".8"/><path d="M2.600 3.400a1.700 1.700 0 1 1 0 1.600M2.400 2.200v1.400h1.400" fill="none" stroke="#777" stroke-width=".6"/></svg><svg style="position:absolute;left:237px;top:227.400px;filter:blur(.35px)" width="13" height="12.500" viewBox="0 0 13 12.5"><rect x=".4" y=".4" width="11.800" height="11.400" rx="1" fill="#fff" opacity=".9"/><path d="M.8 11.400v-2.600l3.400-4 2.400 2.800 1.400-1.200 3.800 3.600v1.400z" fill="#8fc58b" opacity=".95"/><circle cx="9.200" cy="2.900" r="1.700" fill="#ecd77c"/></svg><svg style="position:absolute;left:252.200px;top:227.200px;filter:blur(.3px)" width="8" height="12" viewBox="0 0 8 12"><path d="M1.200 .8v8.600l2-1.800 1.300 3 1.500-.6-1.300-3h2.700z" fill="#222" stroke="#fff" stroke-width="1.300" stroke-linejoin="round"/></svg><div id="tip" style="position:absolute;left:241.600px;top:242.400px;width:70.400px;height:10.200px;background:#1d1d1d;color:#f6f6f6;font-size:6.050px;font-weight:bold;line-height:10.200px;text-align:center;white-space:nowrap;border-radius:.5px;filter:blur(.2px)">Insert Picture from File</div></div><!--/SLIDE-->
</body></html>
